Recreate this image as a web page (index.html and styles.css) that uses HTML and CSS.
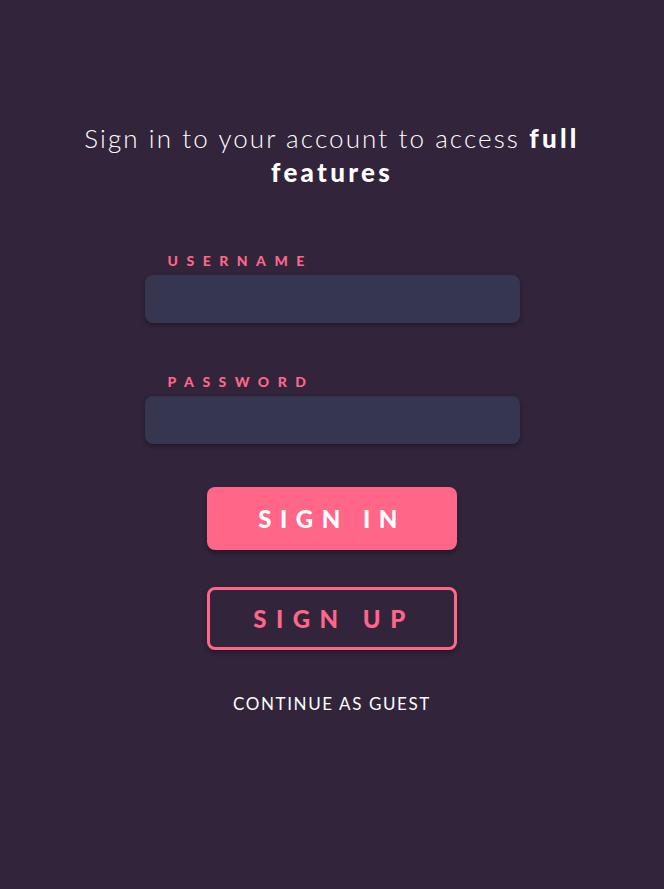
FILE: index.html
```html
<!DOCTYPE html>
<html lang="en">
<head>
<meta charset="utf-8">
<title>Sign in</title>
<link rel="stylesheet" href="styles.css">
</head>
<body>
<main class="page">
  <h1 class="title">Sign in to your account to access <strong>full</strong> <strong>features</strong></h1>
  <form class="form">
    <label class="field">
      <span class="label">Username</span>
      <input class="input" type="text">
    </label>
    <label class="field field-second">
      <span class="label">Password</span>
      <input class="input" type="password">
    </label>
    <div class="actions">
      <button type="button" class="btn btn-primary">Sign in</button>
      <button type="button" class="btn btn-outline">Sign up</button>
      <a class="guest" href="#">Continue as guest</a>
    </div>
  </form>
</main>
</body>
</html>
```
FILE: styles.css
```css
html, body {
  margin: 0;
  padding: 0;
  background: #31243b;
  height: 100%;
}
body {
  font-family: "Lato", "Open Sans", sans-serif;
  color: #ffffff;
}
.page {
  display: flex;
  flex-direction: column;
  align-items: center;
  padding-top: 121px;
}
.title {
  margin: 0;
  width: 560px;
  text-align: center;
  font-size: 26px;
  line-height: 34px;
  font-weight: 300;
  letter-spacing: 2.1px;
}
.title strong {
  font-weight: 900;
  letter-spacing: 3.3px;
}
.form {
  width: 375px;
  margin-top: 64px;
  display: flex;
  flex-direction: column;
}
.field {
  display: flex;
  flex-direction: column;
  gap: 6px;
}
.field-second {
  margin-top: 51px;
}
.label {
  padding-left: 23px;
  font-size: 14px;
  line-height: 16px;
  font-weight: 900;
  text-transform: uppercase;
  letter-spacing: 8.5px;
  color: #ff6688;
}
.input {
  height: 48px;
  box-sizing: border-box;
  border: none;
  border-radius: 8px;
  background: #363650;
  box-shadow: 0 2px 4px rgba(0, 0, 0, 0.35);
  padding: 0 16px;
  color: #fff;
  font: inherit;
  outline: none;
}
.actions {
  display: flex;
  flex-direction: column;
  align-items: center;
  margin-top: 43px;
}
.btn {
  width: 250px;
  height: 63px;
  box-sizing: border-box;
  border-radius: 8px;
  font-family: "Lato", sans-serif;
  font-size: 24px;
  font-weight: 900;
  letter-spacing: 8.5px;
  text-transform: uppercase;
  padding: 0;
  cursor: pointer;
}
.btn-primary {
  background: #ff6688;
  color: #ffffff;
  border: none;
  box-shadow: 0 3px 5px rgba(0, 0, 0, 0.3);
}
.btn-outline {
  margin-top: 37px;
  background: transparent;
  color: #ff6688;
  border: 3px solid #ff6688;
  box-shadow: 0 3px 5px rgba(0, 0, 0, 0.25);
  letter-spacing: 9.5px;
  padding-left: 4px;
}
.guest {
  margin-top: 44px;
  font-size: 17px;
  line-height: 20px;
  font-weight: 400;
  letter-spacing: 1.6px;
  text-transform: uppercase;
  color: #ffffff;
  text-decoration: none;
}
```
